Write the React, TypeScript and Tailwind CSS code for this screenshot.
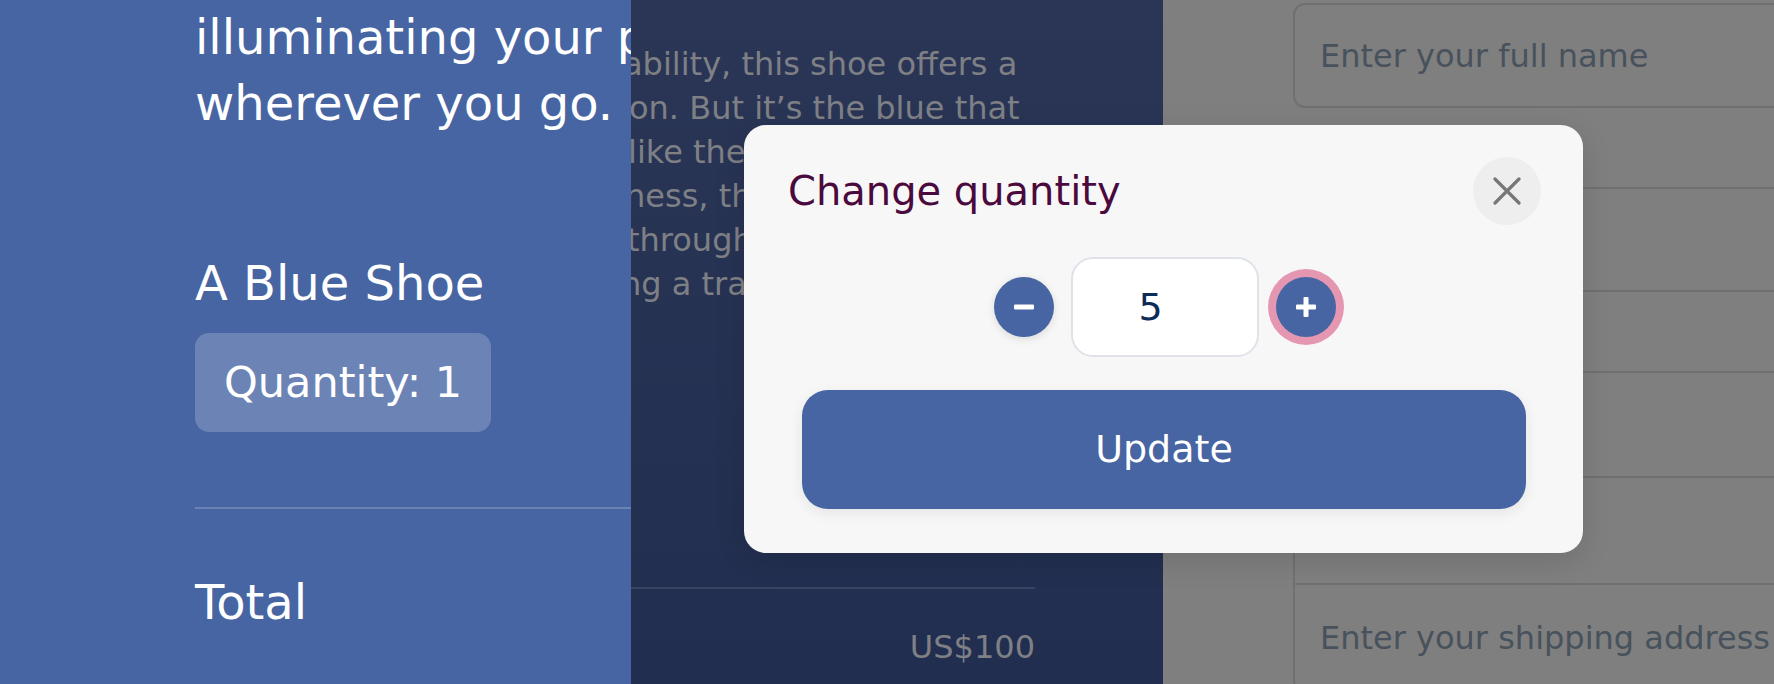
import React from "react"

// Stepper buttons share one look; plus one carries the focus ring
function RoundButton({ kind, focused }: { kind: "minus" | "plus"; focused?: boolean }) {
  return (
    <button
      className={
        focused
          ? "flex h-[60px] w-[60px] items-center justify-center rounded-full bg-[#4665a2] ring-8 ring-[#e597b1]"
          : "flex h-[60px] w-[60px] items-center justify-center rounded-full bg-[#4665a2] shadow-[0_2px_8px_rgba(0,0,0,0.12)]"
      }
    >
      <svg width="22" height="22" viewBox="0 0 22 22">
        <rect x="1" y="8.5" width="20" height="5" rx="1" fill="white" />
        {kind === "plus" && <rect x="8.5" y="1" width="5" height="20" rx="1" fill="white" />}
      </svg>
    </button>
  )
}

export default function App() {
  return (
    <div className="relative flex h-[684px] w-[1774px] overflow-hidden font-['DejaVu_Sans',sans-serif]">
      {/* Order summary */}
      <section className="w-[631px] shrink-0 overflow-hidden bg-[#4665a2] pl-[195px] text-white">
        <p className="-mt-[62px] whitespace-nowrap text-[48px] leading-[66px]">
          a glow so gently spry,
          <br />
          illuminating your path
          <br />
          wherever you go.
        </p>
        <h3 className="mt-[114px] text-[48px] leading-[66px]">A Blue Shoe</h3>
        <div className="mt-[17px] inline-flex h-[99px] items-center rounded-[14px] bg-[#6c83b5] px-[29px] text-[43px]">
          Quantity: 1
        </div>
        <div className="mt-[75px] h-[2px] bg-[#6a82b4]" />
        <div className="mt-[60px] text-[48px] leading-[66px]">Total</div>
      </section>

      {/* Product details (dimmed) */}
      <section className="w-[532px] shrink-0 overflow-hidden bg-gradient-to-b from-[#2b3656] to-[#212e4f] pt-[42px] text-[32px] leading-[44px] text-[#7e8085]">
        <div className="-ml-[8px] whitespace-nowrap">ability, this shoe offers a</div>
        <div className="-ml-[2px] whitespace-nowrap">on. But it’s the blue that</div>
        <div className="-ml-[3px] whitespace-nowrap">like the deep ocean sky</div>
        <div className="-ml-[6px] whitespace-nowrap">ness, the colour glows</div>
        <div className="-ml-[4px] whitespace-nowrap">through every single step,</div>
        <div className="-ml-[10px] whitespace-nowrap">ng a trail of soft light.</div>
        <div className="mt-[281px] h-[2px] w-[404px] bg-[#394462]" />
        <div className="mt-[36px] w-[404px] text-right">US$100</div>
      </section>

      {/* Checkout form (dimmed) */}
      <section className="flex-1 overflow-hidden bg-[#7f7f7f] pl-[130px] pt-[3px] text-[32px] leading-[44px] text-[#48525c]">
        <div className="flex h-[105px] w-[620px] items-center rounded-[12px] border-2 border-[#707070] pl-[25px]">
          Enter your full name
        </div>
        <div className="mt-[79px] flex h-[105px] w-[620px] items-center rounded-[12px] border-2 border-[#707070] pl-[25px]">
          Enter your town
        </div>
        <div className="mt-[79px] flex h-[107px] w-[620px] items-center rounded-t-[12px] border-2 border-[#707070] pl-[25px]">
          City
        </div>
        <div className="flex h-[107px] w-[620px] items-center border-2 border-t-0 border-[#707070] pl-[25px]">
          Postcode
        </div>
        <div className="flex h-[107px] w-[620px] items-center rounded-b-[12px] border-2 border-t-0 border-[#707070] pl-[25px]">
          Enter your shipping address
        </div>
      </section>

      {/* Change quantity dialog */}
      <div className="absolute left-[744px] top-[125px] h-[428px] w-[839px] rounded-[22px] bg-[#f7f7f7] pl-[44px] pr-[42px] pt-[32px] shadow-[0_8px_30px_rgba(0,0,0,0.12)]">
        <div className="flex items-center justify-between">
          <h2 className="text-[40px] leading-[52px] text-[#4b0a3d]">Change quantity</h2>
          <button className="flex h-[68px] w-[68px] items-center justify-center rounded-full bg-[#eeeeee]">
            <svg width="28" height="28" viewBox="0 0 28 28" fill="none" stroke="#777777" strokeWidth="3.2" strokeLinecap="round">
              <path d="M2 2L26 26M26 2L2 26" />
            </svg>
          </button>
        </div>
        <div className="mt-[32px] flex items-center justify-center gap-[17px]">
          <RoundButton kind="minus" />
          <div className="flex h-[100px] w-[188px] items-center justify-center rounded-[22px] border-2 border-[#dfe3e9] bg-white pr-[28px] text-[38px] text-[#0c2b57]">
            5
          </div>
          <RoundButton kind="plus" focused />
        </div>
        <button className="mx-[14px] mt-[33px] flex h-[119px] w-[724px] items-center justify-center rounded-[26px] bg-[#4665a2] text-[38px] text-white shadow-[0_4px_14px_rgba(0,0,0,0.08)]">
          Update
        </button>
      </div>
    </div>
  )
}
